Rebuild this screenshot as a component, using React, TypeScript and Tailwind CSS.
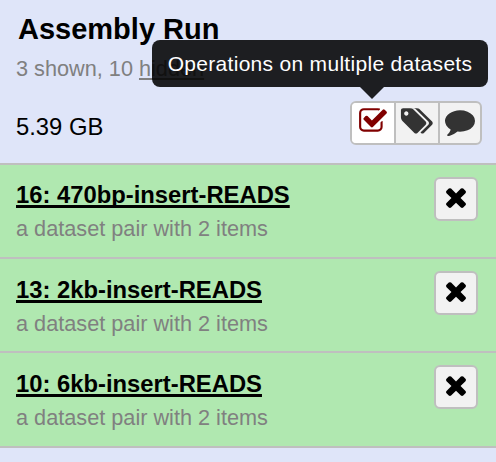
import React from "react";

const ICONS = {
  check:
    "M1472 930v318q0 119-84.5 203.5t-203.5 84.5h-832q-119 0-203.5-84.5t-84.5-203.5v-832q0-119 84.5-203.5t203.5-84.5h832q63 0 117 25 15 7 18 23 3 17-9 29l-49 49q-10 10-23 10-3 0-9-2-23-6-45-6h-832q-66 0-113 47t-47 113v832q0 66 47 113t113 47h832q66 0 113-47t47-113v-254q0-13 9-22l64-64q10-10 23-10 6 0 12 3 20 8 20 29zm231-489l-814 814q-24 24-57 24t-57-24l-430-430q-24-24-24-57t24-57l110-110q24-24 57-24t57 24l263 263 647-647q24-24 57-24t57 24l110 110q24 24 24 57t-24 57z",
  tags: "M384 448q0-53-37.5-90.5t-90.5-37.5-90.5 37.5-37.5 90.5 37.5 90.5 90.5 37.5 90.5-37.5 37.5-90.5zm1067 576q0 53-37 90l-491 492q-39 37-91 37-53 0-90-37l-715-716q-38-37-64.5-101t-26.5-117v-416q0-52 38-90t90-38h416q53 0 117 26.5t102 64.5l715 714q37 39 37 91zm384 0q0 53-37 90l-491 492q-39 37-91 37-36 0-59-14t-53-45l470-470q37-37 37-90 0-52-37-91l-715-714q-38-38-102-64.5t-117-26.5h224q53 0 117 26.5t102 64.5l715 714q37 39 37 91z",
  comment:
    "M1792 896q0 174-120 321.5t-326 233-450 85.5q-70 0-145-8-198 175-460 242-49 14-114 22-17 2-30.5-9t-17.5-29v-1q-3-4-.5-12t2-10 4.5-9.5l6-9 7-8.5 8-9q7-8 31-34.5t34.5-38 31-39.5 32.5-51 27-59 26-76q-157-89-247.5-220t-90.5-281q0-130 71-248.5t191-204.5 286-136.5 348-50.5q244 0 450 85.5t326 233 120 321.5z",
  times:
    "M1490 1322q0 40-28 68l-136 136q-28 28-68 28t-68-28l-294-294-294 294q-28 28-68 28t-68-28l-136-136q-28-28-28-68t28-68l294-294-294-294q-28-28-28-68t28-68l136-136q28-28 68-28t68 28l294 294 294-294q28-28 68-28t68 28l136 136q28 28 28 68t-28 68l-294 294 294 294q28 28 28 68z",
};

function Icon({ name, className = "" }: { name: keyof typeof ICONS; className?: string }) {
  return (
    <svg viewBox="0 0 1792 1792" fill="currentColor" className={`size-[30px] shrink-0 overflow-visible ${className}`}>
      <path d={ICONS[name]} />
    </svg>
  );
}

const DATASETS = [
  { title: "16: 470bp-insert-READS", row: "h-[94px]", text: "pt-[14px]" },
  { title: "13: 2kb-insert-READS", row: "h-[94px]", text: "pt-[15px]" },
  { title: "10: 6kb-insert-READS", row: "h-[95px]", text: "pt-[15px]" },
];

export default function App() {
  return (
    <div className="h-[462px] w-[496px] overflow-hidden bg-[#dfe5f9] font-['Liberation_Sans',Arial,sans-serif] text-black">
      <header className="relative h-[165px] border-b-2 border-[#bfbfbf] px-4 pt-3">
        <h1 className="pl-0.5 text-[29px] leading-[34px] font-bold">Assembly Run</h1>
        <p className="mt-[10px] text-[21.7px] leading-[26px] text-[#808080]">
          3 shown, 10 <span className="underline decoration-2 underline-offset-2">hidden</span>
        </p>
        <div className="mt-[19px] flex justify-between">
          <span className="pt-3 text-[23.8px] leading-7">5.39 GB</span>
          <div className="-mr-0.5 flex h-11 w-[132px] overflow-hidden rounded-md border-2 border-[#bfbfbf] bg-[#f2f2f2] text-[#333]">
            <button className="flex w-[42px] bg-white pt-[3px] pl-[6px] text-[#800000]">
              <Icon name="check" />
            </button>
            <button className="flex w-[44px] border-l-2 border-[#bfbfbf] pt-[3px] pl-[5px]">
              <Icon name="tags" className="ml-[0.5px]" />
            </button>
            <button className="flex w-[42px] border-l-2 border-[#bfbfbf] pt-[3px] pl-[5px]">
              <Icon name="comment" />
            </button>
          </div>
        </div>
        <div className="absolute top-10 left-[152px] flex h-[47px] w-[336px] items-center justify-center rounded-lg bg-black/87 pt-px text-[21px] tracking-[0.3px] whitespace-nowrap text-white">
          Operations on multiple datasets
        </div>
        <div className="absolute top-[87px] left-[360px] h-0 w-0 border-x-12 border-t-12 border-x-transparent border-t-black/87" />
      </header>
      <main>
        {DATASETS.map((d) => (
          <section key={d.title} className={`flex justify-between border-b-2 border-[#bfbfbf] bg-[#b0e8b0] pr-[18px] pl-4 ${d.row}`}>
            <div className={d.text}>
              <h2 className="text-[23.8px] leading-8 font-bold underline decoration-3 underline-offset-2 [text-decoration-skip-ink:none]">
                {d.title}
              </h2>
              <p className="mt-[5px] text-[21.7px] leading-[26px] text-[#808080]">a dataset pair with 2 items</p>
            </div>
            <button className="mt-3 flex size-11 rounded-md border-2 border-[#bfbfbf] bg-[#f2f2f2] pt-[3px] pl-[5px]">
              <Icon name="times" />
            </button>
          </section>
        ))}
      </main>
    </div>
  );
}
